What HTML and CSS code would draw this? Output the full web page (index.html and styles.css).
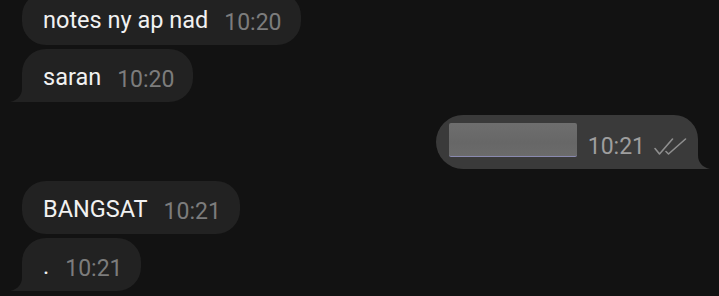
FILE: index.html
```html
<!DOCTYPE html>
<html lang="en">
<head>
    <meta charset="UTF-8">
    <meta name="viewport" content="width=device-width, initial-scale=1.0">
    <title>Chat</title>
    <link rel="stylesheet" href="styles.css">
</head>
<body>
    <div class="chat">
        <div class="group group-in">
            <div class="msg msg-in">
                <span class="msg-text">notes ny ap nad</span>
                <span class="msg-time">10:20</span>
            </div>
            <div class="msg msg-in has-tail">
                <span class="msg-text">saran</span>
                <span class="msg-time">10:20</span>
                <svg class="tail tail-left" width="12" height="14" viewBox="0 0 12 14"><path d="M12 0 Q12 11 0 14 L12 14 Z"/></svg>
            </div>
        </div>

        <div class="group group-out">
            <div class="msg msg-out has-tail">
                <div class="blurred"></div>
                <span class="msg-time">10:21</span>
                <svg class="checks" width="33" height="17" viewBox="0 0 33 17">
                    <polyline points="1,10.5 5.5,16 18.5,1"/>
                    <polyline points="12,13.5 14.5,16 31.5,1"/>
                </svg>
                <svg class="tail tail-right" width="12" height="14" viewBox="0 0 12 14"><path d="M0 0 Q0 11 12 14 L0 14 Z"/></svg>
            </div>
        </div>

        <div class="group group-in">
            <div class="msg msg-in">
                <span class="msg-text">BANGSAT</span>
                <span class="msg-time">10:21</span>
            </div>
            <div class="msg msg-in has-tail">
                <span class="msg-text">.</span>
                <span class="msg-time">10:21</span>
                <svg class="tail tail-left" width="12" height="14" viewBox="0 0 12 14"><path d="M12 0 Q12 11 0 14 L12 14 Z"/></svg>
            </div>
        </div>
    </div>
</body>
</html>
```

FILE: styles.css
```css
body {
    margin: 0;
    background-color: #121212;
    font-family: Roboto, "Liberation Sans", sans-serif;
    overflow: hidden;
}
.chat {
    display: flex;
    flex-direction: column;
    gap: 12px;
    margin-top: -8px;
    padding: 0 22px 0 22px;
}
.group {
    display: flex;
    flex-direction: column;
    gap: 4px;
}
.group-in {
    align-items: flex-start;
}
.group-out {
    align-items: flex-end;
    margin-top: 1px;
    margin-right: -1px;
}
.msg {
    position: relative;
    display: flex;
    align-items: flex-end;
    gap: 16px;
    border-radius: 24px;
}
.msg-in {
    background-color: #222222;
    padding: 15px 19px 9px 21px;
}
.msg-in.has-tail {
    border-bottom-left-radius: 0;
}
.msg-out {
    background-color: #3a3a3a;
    padding: 8px 11px 9px 13px;
    gap: 0;
    border-radius: 27px 24px 0 27px;
}
.msg-text {
    color: #f1f1f1;
    font-size: 23.5px;
    line-height: 26px;
    padding-bottom: 3px;
}
.msg-time {
    color: #7c7c7c;
    font-size: 23px;
    line-height: 26px;
}
.msg-out .msg-time {
    color: #9e9e9e;
    margin-left: 11px;
}
.blurred {
    width: 128px;
    height: 33px;
    margin-bottom: 3px;
    border-radius: 2px;
    background: linear-gradient(180deg, #6e6e6e 0%, #676767 60%, #6b6b6b 100%);
    border-bottom: 1px solid #8a8ab0;
}
.checks {
    margin-left: 9px;
    margin-bottom: 5px;
}
.checks polyline {
    fill: none;
    stroke: #8f8f8f;
    stroke-width: 1.6;
    stroke-linecap: round;
    stroke-linejoin: round;
}
.tail {
    position: absolute;
    bottom: 0;
}
.tail-left {
    left: -12px;
    fill: #222222;
}
.tail-right {
    right: -12px;
    fill: #3a3a3a;
}
```
